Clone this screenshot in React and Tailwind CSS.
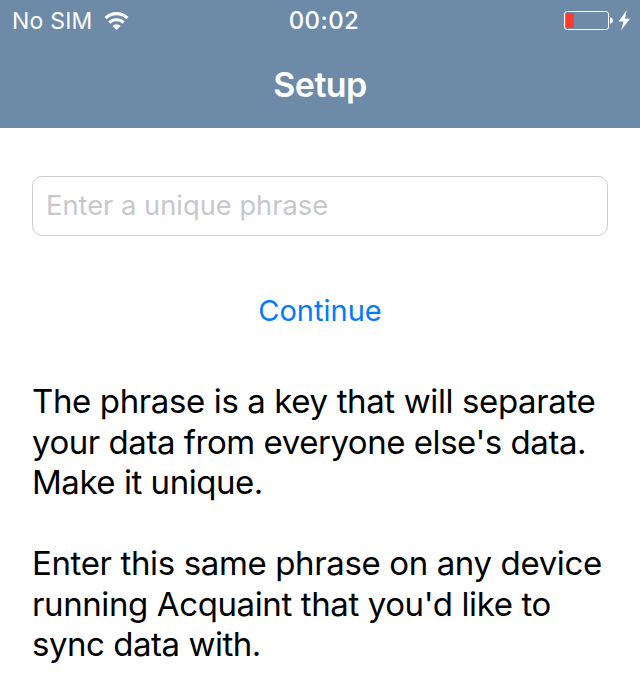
const paragraphs = [
  [
    { text: "The phrase is a key that will separate", tracking: "tracking-[-0.38px]" },
    { text: "your data from everyone else's data.", tracking: "tracking-[-0.46px]" },
    { text: "Make it unique.", tracking: "tracking-[-0.46px]" },
  ],
  [
    { text: "Enter this same phrase on any device", tracking: "tracking-[-0.37px]" },
    { text: "running Acquaint that you'd like to", tracking: "tracking-[-0.39px]" },
    { text: "sync data with.", tracking: "tracking-[-0.47px]" },
  ],
];

function WifiIcon() {
  return (
    <svg width="25" height="18" viewBox="0 0 25 18" fill="none" stroke="currentColor" strokeWidth="3.1">
      <path d="M1.6 6.1a15.6 15.6 0 0 1 21.8 0M5.4 10.6a10.2 10.2 0 0 1 14.2 0" />
      <path d="M12.5 18l-4.1-4.1a5.8 5.8 0 0 1 8.2 0z" fill="currentColor" stroke="none" />
    </svg>
  );
}

function BatteryIcon() {
  return (
    <svg width="68" height="22" viewBox="0 0 68 22">
      <rect x="2.5" y="2.5" width="44" height="18" rx="2.5" fill="none" stroke="white" />
      <rect x="4" y="4" width="8" height="15" rx="0.8" fill="#ff3b30" />
      <path d="M48 8.2q3 .8 3 3.3t-3 3.3z" fill="white" />
      <path d="M64.8 1L56.6 12.4h4.9L59 21.4L68 9.8h-5z" fill="white" />
    </svg>
  );
}

export default function App() {
  return (
    <div className="h-[697px] w-[640px] overflow-hidden bg-white font-['Inter',sans-serif] text-black">
      <header className="h-32 bg-[#6d8aa8] text-white">
        <div className="grid h-10 grid-cols-3 items-center pr-2.5 pl-3 text-[23px]">
          <div className="flex items-center gap-[11px] pt-0.5">
            <span className="whitespace-nowrap tracking-[0.2px]">No SIM</span>
            <WifiIcon />
          </div>
          <span className="pt-0.5 pl-1.5 text-center text-[24px] font-medium tracking-[0.4px]">00:02</span>
          <div className="flex items-center justify-end">
            <BatteryIcon />
          </div>
        </div>
        <h1 className="flex h-[88px] items-center justify-center text-[34px] font-semibold tracking-[-0.6px]">Setup</h1>
      </header>
      <main className="px-8 pt-12">
        <input
          placeholder="Enter a unique phrase"
          className="block h-[60px] w-full rounded-[10px] border border-[#cccccc] px-[13px] pb-0.5 text-[27.3px] placeholder:text-[#c7c7cd]"
        />
        <button className="mx-auto mt-[55px] block h-10 text-[29px] leading-10 text-[#007aff]">
          Continue
        </button>
        <div className="mt-[50px] flex flex-col gap-[40.5px] text-[33px] leading-[40.5px]">
          {paragraphs.map((lines, i) => (
            <p key={i}>
              {lines.map((line) => (
                <span key={line.text} className={`block whitespace-nowrap ${line.tracking}`}>
                  {line.text}
                </span>
              ))}
            </p>
          ))}
        </div>
      </main>
    </div>
  );
}
